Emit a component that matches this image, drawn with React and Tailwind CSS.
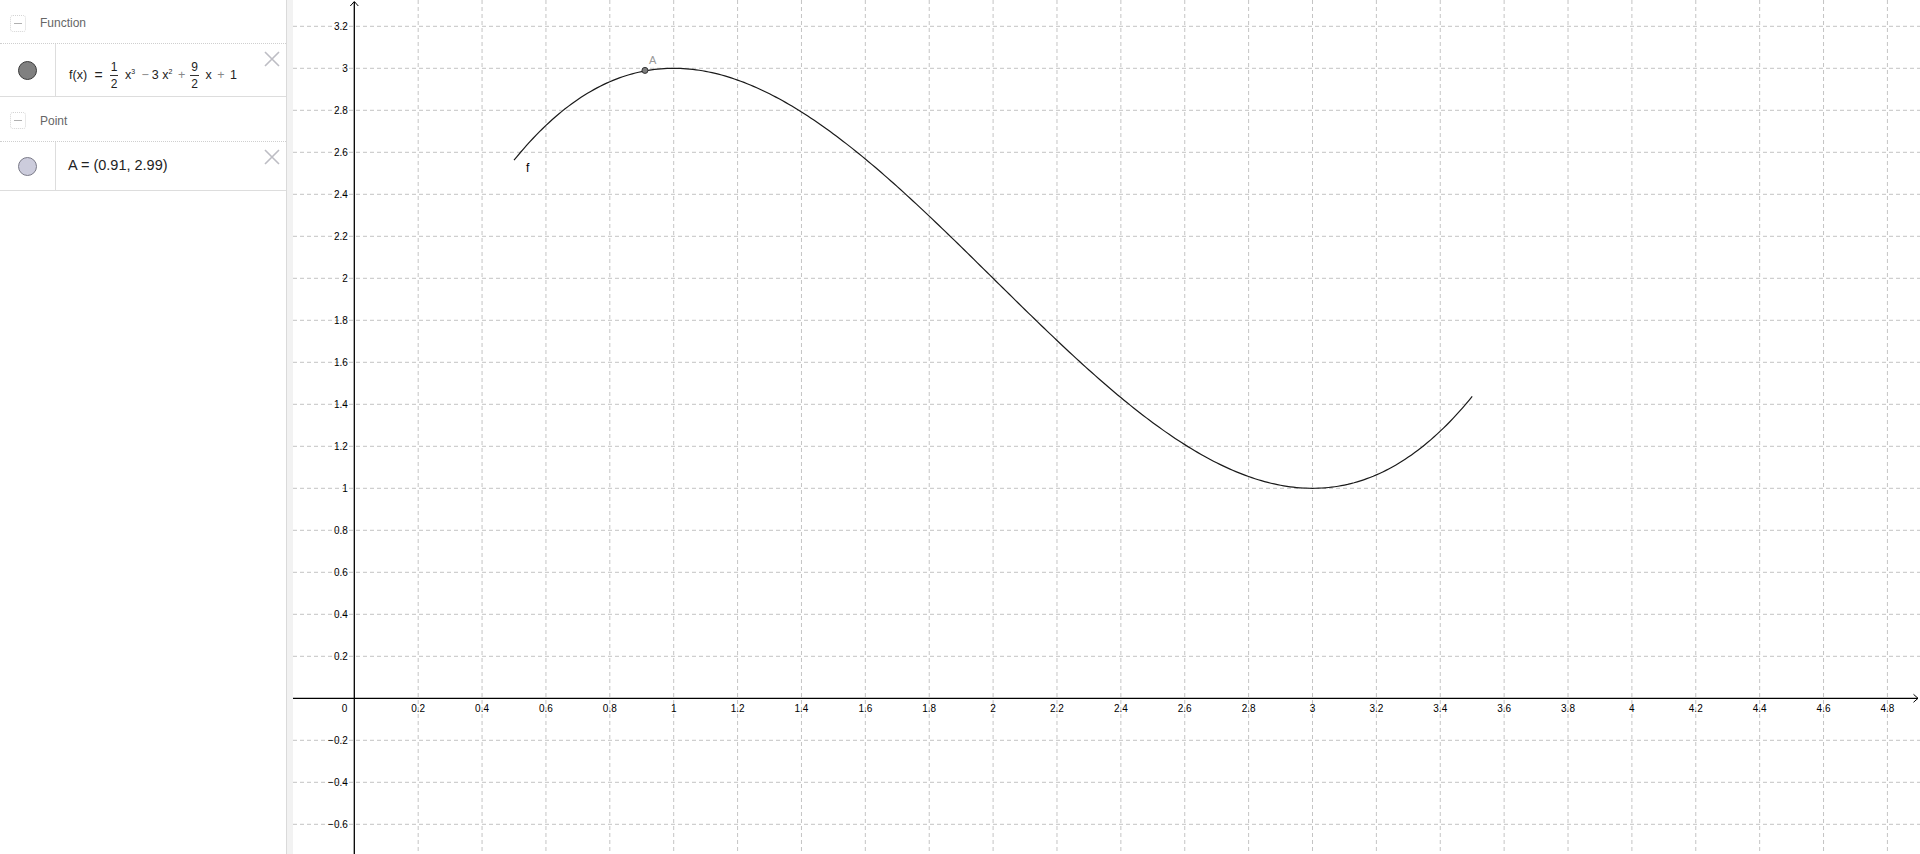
import React from "react";

const OX = 61.3; // origin x in svg coords (graph starts at page x=293)
const OY = 698.3;
const SX = 319.4;
const SY = 210;
const W = 1627;
const H = 854;

const px = (x) => OX + x * SX;
const py = (y) => OY - y * SY;
const f = (x) => 0.5 * x * x * x - 3 * x * x + 4.5 * x + 1;

function fmt(v) {
  const r = Math.round(v * 10) / 10;
  const s = Number.isInteger(r) ? String(r) : r.toFixed(1);
  return s.startsWith("-") ? "\u2212" + s.slice(1) : s;
}

function Graph() {
  const vLines = [];
  for (let k = 1; k <= 24; k++) vLines.push(k * 0.2);
  const hLines = [];
  for (let k = -3; k <= 16; k++) if (k !== 0) hLines.push(k * 0.2);

  let d = "";
  for (let i = 0; i <= 300; i++) {
    const x = 0.5 + (3 * i) / 300;
    d += (i === 0 ? "M" : "L") + px(x).toFixed(2) + " " + py(f(x)).toFixed(2) + " ";
  }

  const ax = px(0.91);
  const ay = py(2.99);

  return (
    <svg width={W} height={H} viewBox={`0 0 ${W} ${H}`} className="block">
      <rect x="0" y="0" width={W} height={H} fill="#ffffff" />
      {vLines.map((v) => (
        <line key={"v" + v} x1={px(v)} x2={px(v)} y1="0" y2={H} stroke="#c4c4c4" strokeWidth="1" strokeDasharray="4 3" />
      ))}
      {hLines.map((v) => (
        <line key={"h" + v} x1="0" x2={W} y1={py(v)} y2={py(v)} stroke="#c4c4c4" strokeWidth="1" strokeDasharray="4 3" />
      ))}
      {/* axes */}
      <line x1="0" x2={W - 2} y1={OY} y2={OY} stroke="#000" strokeWidth="1.3" />
      <line x1={OX} x2={OX} y1="2" y2={H} stroke="#000" strokeWidth="1.3" />
      <path d={`M${OX - 4} ${6} L${OX} ${1.5} L${OX + 4} ${6}`} fill="none" stroke="#000" strokeWidth="1" />
      <path d={`M${W - 6.5} ${OY - 4} L${W - 2} ${OY} L${W - 6.5} ${OY + 4}`} fill="none" stroke="#000" strokeWidth="1" />
      {/* labels */}
      <g fontFamily="'Liberation Sans', Arial, sans-serif" fontSize="10" fill="#000">
        <text x={OX - 7} y={OY + 14} textAnchor="end">0</text>
        {vLines.map((v) => (
          <text key={"xl" + v} x={px(v)} y={OY + 14} textAnchor="middle">{fmt(v)}</text>
        ))}
        {hLines.map((v) => (
          <text key={"yl" + v} x={OX - 6.5} y={py(v) + 3.6} textAnchor="end">{fmt(v)}</text>
        ))}
      </g>
      {/* function curve */}
      <path d={d} fill="none" stroke="#1a1a1a" strokeWidth="1.2" />
      <text x={px(0.5) + 12} y={py(f(0.5)) + 12} fontFamily="'Liberation Sans', Arial, sans-serif" fontSize="12" fill="#000">f</text>
      {/* point A */}
      <circle cx={ax} cy={ay} r="3" fill="#7d7d7d" stroke="#333" strokeWidth="1" />
      <text x={ax + 4} y={ay - 6} fontFamily="'Liberation Sans', Arial, sans-serif" fontSize="11" fill="#999">A</text>
    </svg>
  );
}

function Collapse() {
  return (
    <div className="w-[16px] h-[17px] rounded-[3px] border border-dotted border-[#d4d4d4] flex items-center justify-center">
      <div className="w-[8px] h-[1px] bg-[#b0b0b0]" />
    </div>
  );
}

function CloseX() {
  return (
    <svg width="16" height="16" viewBox="0 0 16 16" className="block">
      <path d="M1 1 L15 15 M15 1 L1 15" stroke="#bdbdc4" strokeWidth="1.6" fill="none" />
    </svg>
  );
}

function Frac({ n, d }) {
  return (
    <span className="inline-flex flex-col items-center align-middle mx-[3px] leading-none text-[12px]">
      <span className="px-[1px]">{n}</span>
      <span className="w-full h-px bg-[#333] my-[2px]" />
      <span className="px-[1px]">{d}</span>
    </span>
  );
}

export default function App() {
  return (
    <div className="flex w-[1920px] h-[854px] overflow-hidden bg-white" style={{ fontFamily: "'Liberation Sans', Arial, sans-serif" }}>
      <div className="w-[286px] shrink-0 h-full bg-white flex flex-col">
        <div className="h-[44px] flex items-center pl-[10px] pt-[3px] gap-[14px] border-b border-dotted border-[#cfcfcf]">
          <Collapse />
          <span className="text-[12px] text-[#666]">Function</span>
        </div>
        <div className="h-[53px] flex border-b border-[#dddddd]">
          <div className="w-[56px] shrink-0 border-r border-[#dddddd] flex items-center justify-center">
            <div className="w-[19px] h-[19px] rounded-full bg-[#808080] border-[1.5px] border-[#3a3a3a]" />
          </div>
          <div className="flex-1 flex items-center pl-[13px] pt-[10px] text-[12.5px] text-[#222] whitespace-pre">
            <span>f(x) </span>
            <span className="mx-[4px] text-[14px]">=</span>
            <Frac n="1" d="2" />
            <span> x<sup className="text-[7px] relative -top-[5px]">3</sup> </span>
            <span className="mx-[3px] text-[#888]">−</span>
            <span>3 x<sup className="text-[7px] relative -top-[5px]">2</sup> </span>
            <span className="mx-[2px] text-[#888]">+</span>
            <Frac n="9" d="2" />
            <span> x </span>
            <span className="mx-[2px] text-[#888]">+</span>
            <span> 1</span>
          </div>
          <div className="pt-[7px] pr-[6px]">
            <CloseX />
          </div>
        </div>
        <div className="h-[45px] flex items-center pl-[10px] pt-[3px] gap-[14px] border-b border-dotted border-[#cfcfcf]">
          <Collapse />
          <span className="text-[12px] text-[#666]">Point</span>
        </div>
        <div className="h-[49px] flex border-b border-[#dddddd]">
          <div className="w-[56px] shrink-0 border-r border-[#dddddd] flex items-center justify-center">
            <div className="w-[19px] h-[19px] rounded-full bg-[#ccccdc] border border-[#7a7a88]" />
          </div>
          <div className="flex-1 flex items-center pl-[12px] text-[14.5px] text-[#222] whitespace-pre">
            A = (0.91, 2.99)
          </div>
          <div className="pt-[7px] pr-[6px]">
            <CloseX />
          </div>
        </div>
        <div className="flex-1" />
      </div>
      <div className="w-[7px] shrink-0 h-full bg-[#f2f2f2] border-l border-[#dadada]" />
      <div className="flex-1 h-full relative">
        <Graph />
      </div>
    </div>
  );
}
